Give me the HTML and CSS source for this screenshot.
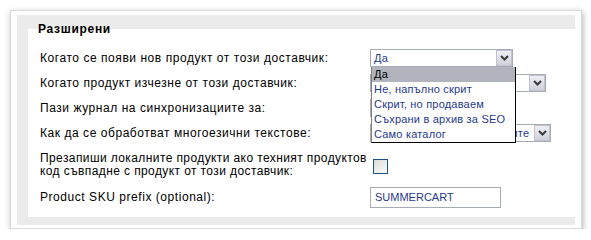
FILE: index.html
```html
<!DOCTYPE html>
<html lang="bg">
<head>
    <meta charset="UTF-8">
    <title>Разширени</title>
    <link rel="stylesheet" href="styles.css">
</head>
<body>
    <div class="panel">
        <div class="panel-inner">
            <fieldset class="box">
                <legend>Разширени</legend>

                <div class="row">
                    <label>Когато се появи нов продукт от този доставчик:</label>
                    <div class="field">
                        <div class="select w1">
                            <span class="value">Да</span>
                            <span class="arrow"><svg width="9" height="6" viewBox="0 0 9 6"><path d="M1 1l3.5 3.5L8 1" fill="none" stroke="#3a3a3a" stroke-width="2"/></svg></span>
                        </div>
                        <ul class="dropdown">
                            <li class="selected">Да</li>
                            <li>Не, напълно скрит</li>
                            <li>Скрит, но продаваем</li>
                            <li>Съхрани в архив за SEO</li>
                            <li>Само каталог</li>
                        </ul>
                    </div>
                </div>

                <div class="row">
                    <label>Когато продукт изчезне от този доставчик:</label>
                    <div class="field">
                        <div class="select w2">
                            <span class="value">Скрий</span>
                            <span class="arrow"><svg width="9" height="6" viewBox="0 0 9 6"><path d="M1 1l3.5 3.5L8 1" fill="none" stroke="#3a3a3a" stroke-width="2"/></svg></span>
                        </div>
                    </div>
                </div>

                <div class="row">
                    <label>Пази журнал на синхронизациите за:</label>
                    <div class="field">
                        <div class="select w3">
                            <span class="value">30 дни</span>
                            <span class="arrow"><svg width="9" height="6" viewBox="0 0 9 6"><path d="M1 1l3.5 3.5L8 1" fill="none" stroke="#3a3a3a" stroke-width="2"/></svg></span>
                        </div>
                    </div>
                </div>

                <div class="row">
                    <label>Как да се обработват многоезични текстове:</label>
                    <div class="field">
                        <div class="select w4">
                            <span class="value">Обработи ги както основните</span>
                            <span class="arrow"><svg width="9" height="6" viewBox="0 0 9 6"><path d="M1 1l3.5 3.5L8 1" fill="none" stroke="#3a3a3a" stroke-width="2"/></svg></span>
                        </div>
                    </div>
                </div>

                <div class="row tall">
                    <label>Презапиши локалните продукти ако техният продуктов<br>код съвпадне с продукт от този доставчик:</label>
                    <div class="field">
                        <span class="checkbox"></span>
                    </div>
                </div>

                <div class="row">
                    <label>Product SKU prefix (optional):</label>
                    <div class="field">
                        <div class="text-input">SUMMERCART</div>
                    </div>
                </div>
            </fieldset>
        </div>
    </div>
</body>
</html>
```

FILE: styles.css
```css
body {
    margin: 0;
    background: #fff;
    font-family: "Liberation Sans", Arial, sans-serif;
    font-size: 12px;
    color: #000;
}

.panel {
    box-sizing: border-box;
    width: 572px;
    height: 219px;
    margin: 10px 0 0 10px;
    padding: 4px 6px 3px 6px;
    background: #fff;
    border: 1px solid #dadada;
    box-shadow: 1px 2px 6px rgba(0, 0, 0, 0.3);
}

.panel-inner {
    background: #ebebeb;
    height: 100%;
    box-sizing: border-box;
    padding: 7px 0 8px 11px;
}

.box {
    margin: 0;
    padding: 8px 0 9px 12px;
    border: none;
    border-top: 1px solid #fff;
    background: #fff;
    height: 100%;
    box-sizing: border-box;
}

.box legend {
    font-weight: bold;
    font-size: 12px;
    letter-spacing: 0.7px;
    line-height: 15px;
    padding: 0 2px 0 1px;
    margin-left: -3px;
}

.row {
    display: flex;
    align-items: center;
    min-height: 25px;
}

.row.tall {
    min-height: 39px;
}

.row label {
    flex: 0 0 330px;
    white-space: nowrap;
    line-height: 13px;
    letter-spacing: 0.55px;
    padding-top: 2px;
}

.row.tall label {
    padding-top: 0;
    letter-spacing: 0.4px;
}

.field {
    position: relative;
    font-size: 11px;
}

.select {
    display: flex;
    box-sizing: border-box;
    height: 18px;
    border: 1px solid #a5acb2;
    background: #fff;
    color: #1f3a8c;
    overflow: hidden;
}

.w1 { width: 143px; }
.w2 { width: 176px; }
.w3 { width: 140px; }
.w4 { width: 181px; }

.select .value {
    flex: 1;
    padding-left: 3px;
    line-height: 16px;
    letter-spacing: 0.2px;
    white-space: nowrap;
    overflow: hidden;
}

.select .arrow {
    box-sizing: border-box;
    width: 16px;
    height: 16px;
    display: flex;
    align-items: center;
    justify-content: center;
    border: 1px solid #c0c2d0;
    background: linear-gradient(#eeeef4, #cfd0dc);
}

.dropdown {
    position: absolute;
    left: 1px;
    top: 18px;
    width: 143px;
    margin: 0;
    padding: 0;
    list-style: none;
    background: #fff;
    border: 1px solid #000;
    border-left-color: #808080;
    border-top: none;
    color: #1f3a8c;
    z-index: 2;
}

.dropdown li {
    line-height: 15px;
    padding-left: 2px;
    letter-spacing: 0.2px;
    white-space: nowrap;
}

.dropdown li.selected {
    background: #b1b3bd;
    color: #000;
}

.checkbox {
    display: block;
    width: 13px;
    height: 13px;
    margin: 3px 0 0 3px;
    border: 1px solid #1c5180;
    background: linear-gradient(135deg, #dcdcd7, #fbfbf9);
}

.text-input {
    box-sizing: border-box;
    width: 131px;
    height: 21px;
    margin-top: 2px;
    border: 1px solid #a5acb2;
    color: #1f3a8c;
    padding-left: 4px;
    line-height: 19px;
}
```
